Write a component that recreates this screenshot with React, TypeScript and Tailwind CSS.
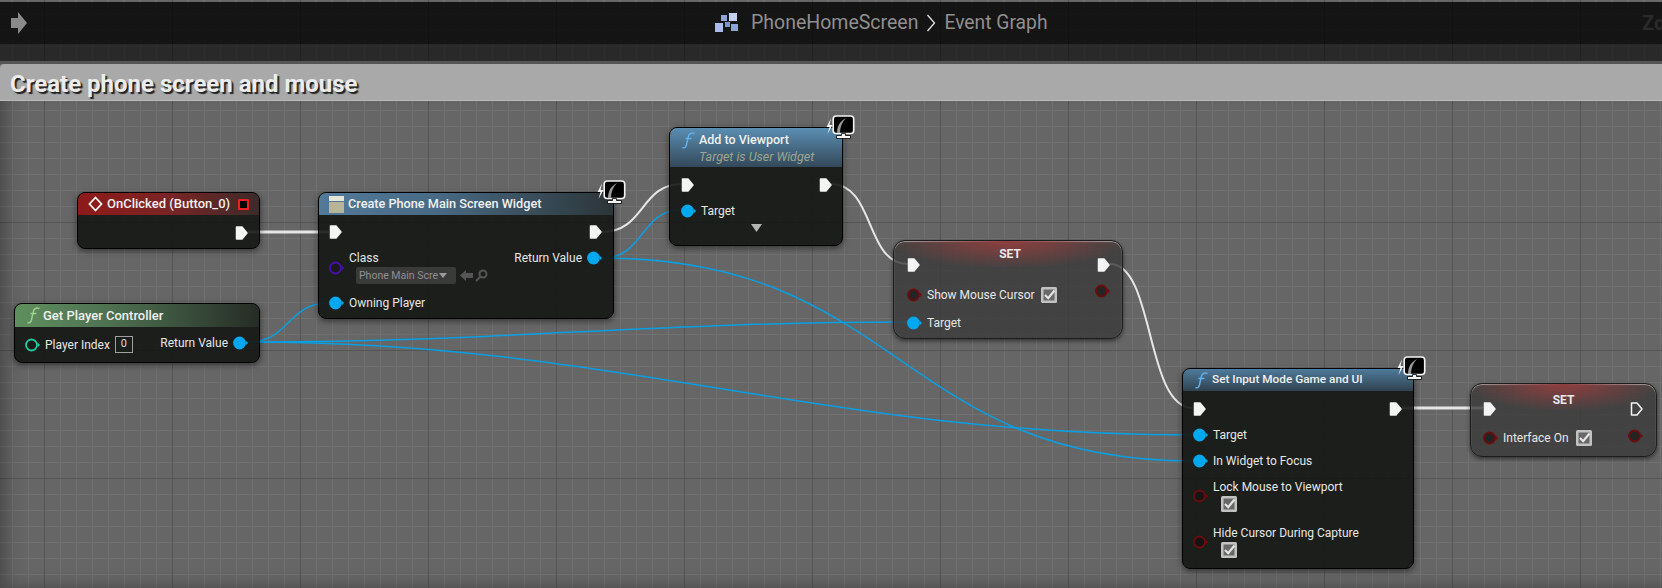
import type { FC, ReactNode } from "react";

const ExecPin: FC<{ hollow?: boolean }> = ({ hollow }) => (
  <svg width="13" height="14" viewBox="0 0 13 14" className="shrink-0">
    <path
      d="M1.500 1h5.500l5 6-5 6H1.500z"
      fill={hollow ? "none" : "#f4f4f4"}
      stroke="#f4f4f4"
      strokeWidth="1.500"
      strokeLinejoin="round"
    />
  </svg>
);

const DataPin: FC<{ ring?: string; fill?: string }> = ({ ring = "#00a8f2", fill = "#00a8f2" }) => (
  <svg width="15" height="14" viewBox="0 0 15 14" className="shrink-0">
    <circle cx="6.500" cy="7" r="5.500" fill={fill} stroke={ring} strokeWidth="1.800" />
    <path d="M12.800 4.800l2.200 2.200-2.200 2.200z" fill={ring} />
  </svg>
);

const BoolPin = () => <DataPin ring="#6e0b0b" fill="#242424" />;

const CheckBox = () => (
  <svg width="16" height="16" viewBox="0 0 16 16" className="shrink-0">
    <rect width="16" height="16" rx="1.500" fill="#c2c2c2" />
    <rect x="2.500" y="2.500" width="11" height="11" fill="#686868" />
    <path d="M4 8l3.200 3.200L13.500 3.500" fill="none" stroke="#e4e4e4" strokeWidth="2.200" />
  </svg>
);

const FuncIcon: FC<{ color?: string }> = ({ color = "#62aee6" }) => (
  <svg width="14" height="17" viewBox="0 0 14 17" className="shrink-0" fill="none" stroke={color} strokeWidth="1.500">
    <path d="M0.500 15.500c2.500 1 3.500-.5 4-3L6.500 4c.5-2.500 3-3.500 6-2.500" />
    <path d="M3.500 6.500h6" />
  </svg>
);

const Monitor = () => (
  <svg width="31" height="25" viewBox="0 0 31 25" className="absolute top-[-13px] right-[-13px]">
    <path d="M7 3.500L2.500 12h3L3.500 19l5-9h-3z" fill="#f4f4f4" />
    <rect x="9.200" y="1" width="20.500" height="17.500" rx="3" fill="#000" stroke="#f4f4f4" strokeWidth="1.600" />
    <path d="M13 18c0-7 3-12 9-15-4 4-6 9-6 15z" fill="#9a9a9a" />
    <path d="M17.500 18.500v2h-5v3h14v-3h-5v-2z" fill="#f4f4f4" stroke="#000" strokeWidth="0.800" />
  </svg>
);

const Label: FC<{ children: ReactNode; className?: string }> = ({ children, className = "" }) => (
  <span className={`text-[12px] leading-none whitespace-nowrap text-[#e6e6e6] ${className}`}>{children}</span>
);

const App: FC = () => (
  <div className="relative flex h-[588px] w-[1662px] flex-col overflow-hidden bg-[#666666] bg-[linear-gradient(#555555_1px,transparent_1px),linear-gradient(90deg,#555555_1px,transparent_1px),linear-gradient(#717171_1px,transparent_1px),linear-gradient(90deg,#717171_1px,transparent_1px)] bg-[size:128px_128px,128px_128px,16px_16px,16px_16px] bg-[position:44px_94px,44px_94px,12px_14px,12px_14px] font-['Roboto',sans-serif]">
    {/* breadcrumb bar */}
    <header className="mt-[2px] flex h-[42px] shrink-0 items-center bg-black/80">
      <svg width="18" height="22" viewBox="0 0 18 22" className="ml-[10px]">
        <path d="M1 6h7V0l9 11-9 11v-6H1z" fill="#8a8a8a" />
      </svg>
      <svg width="25" height="22" viewBox="0 0 25 22" className="ml-[686px]">
        <rect x="7" y="3" width="6" height="6" fill="#8ea4d8" />
        <rect x="15" y="1" width="8" height="8" fill="#c3d0f2" />
        <rect x="1" y="11" width="8" height="9" fill="#a9bbea" />
        <rect x="11" y="10" width="5" height="5" fill="#7e93c8" />
        <rect x="17" y="12" width="7" height="7" fill="#8ea4d8" />
      </svg>
      <span className="ml-[12px] text-[19.500px] text-[#8f8f8f]">PhoneHomeScreen</span>
      <svg width="10" height="20" viewBox="0 0 10 20" className="ml-[8px]">
        <path d="M1.500 2l7 8-7 8" fill="none" stroke="#e2e2e2" strokeWidth="1.300" />
      </svg>
      <span className="ml-[8px] text-[19.300px] text-[#8f8f8f]">Event Graph</span>
      <span className="ml-auto w-[20px] overflow-hidden text-[20px] font-bold whitespace-nowrap text-[#2a2a2a]">
        Zoom
      </span>
    </header>
    <div className="h-[17px] shrink-0 bg-black/60" />
    <div className="h-[3px] shrink-0 bg-[#555555]" />

    {/* comment box title */}
    <div className="flex h-[37px] shrink-0 items-center rounded-tl-[4px] border-b border-[#bcbcbc] bg-[#a9a9a9] pt-[3px] pl-[10px]">
      <span className="text-[24px] font-bold text-[#ececec] [text-shadow:2px_2px_1px_#222]">
        Create phone screen and mouse
      </span>
    </div>

    {/* edge shading of the graph panel */}
    <div className="pointer-events-none absolute inset-x-0 top-[101px] bottom-0 shadow-[inset_14px_-8px_18px_-8px_rgba(0,0,0,0.3)]" />

    {/* wires */}
    <svg className="pointer-events-none absolute inset-0" width="1662" height="588" fill="none">
      <g stroke="#e6e6e6" strokeWidth="2">
        <path d="M248 232H329" strokeWidth="2.800" />
        <path d="M602 232C645 232 640 184 682 184" />
        <path d="M831 184C875 184 865 264 908 264" />
        <path d="M1110 264C1155 264 1145 408 1193 408" />
        <path d="M1402 408H1483" strokeWidth="2.800" />
      </g>
      <g stroke="#0a9fe3" strokeWidth="1.500">
        <path d="M248 342C290 342 287 303 329 303" />
        <path d="M248 342C500 342 650 322 907 322" />
        <path d="M248 342C620 342 820 435 1193 435" />
        <path d="M602 258C645 258 640 210 681 210" />
        <path d="M602 258C900 258 900 461 1193 461" />
      </g>
    </svg>

    {/* OnClicked */}
    <section className="absolute top-[192px] left-[77px] h-[57px] w-[183px] rounded-[8px] border border-black bg-[#141613]/90 shadow-[0_2px_6px_rgba(0,0,0,0.5)]">
      <div className="flex h-[22px] items-center rounded-t-[7px] bg-[linear-gradient(90deg,#8e1a1a,#7a2424_50%,#3c2b2a)] px-[10px]">
        <svg width="15" height="16" viewBox="0 0 15 16" className="shrink-0">
          <path d="M7.500 1.500l6 6.500-6 6.500-6-6.500z" fill="#8e1a1a" stroke="#f2f2f2" strokeWidth="1.800" />
        </svg>
        <span className="ml-[4px] text-[13px] font-medium whitespace-nowrap text-[#f0f0f0]">OnClicked (Button_0)</span>
        <span className="ml-auto size-[11px] shrink-0 rounded-[1px] border-2 border-[#ee2020] bg-black" />
      </div>
      <div className="mt-[11px] flex justify-end pr-[11px]">
        <ExecPin />
      </div>
    </section>

    {/* Create Phone Main Screen Widget */}
    <section className="absolute top-[192px] left-[318px] h-[127px] w-[296px] rounded-[8px] border border-black bg-[#141613]/90 shadow-[0_2px_6px_rgba(0,0,0,0.5)]">
      <div className="relative flex h-[22px] items-center rounded-t-[7px] bg-[linear-gradient(90deg,#527a99,#486a84_40%,#2c3538)] px-[10px]">
        <svg width="15" height="17" viewBox="0 0 15 17" className="shrink-0">
          <rect width="15" height="5" fill="#e6e6da" />
          <rect y="6" width="15" height="11" fill="#b8b49a" />
        </svg>
        <span className="ml-[4px] text-[12.700px] font-medium whitespace-nowrap text-[#f0f0f0]">
          Create Phone Main Screen Widget
        </span>
        <Monitor />
      </div>
      <div className="flex justify-between pr-[11px] pl-[10px]">
        <div className="flex flex-col">
          <div className="mt-[10px]">
            <ExecPin />
          </div>
          <div className="mt-[13px] flex items-center gap-[5px]">
            <DataPin ring="#4a0fb0" fill="#1a1a1a" />
            <div className="flex flex-col">
              <Label className="h-[15px]">Class</Label>
              <div className="flex items-center">
                <div className="ml-[7px] flex h-[17px] w-[100px] items-center rounded-[2px] bg-[#3a3a3a] pl-[3px]">
                  <span className="text-[10.500px] text-[#8f8f8f]">Phone Main Scre</span>
                  <svg width="8" height="5" viewBox="0 0 8 5" className="ml-[1px]">
                    <path d="M0 0h8L4 5z" fill="#9a9a9a" />
                  </svg>
                </div>
                <svg width="13" height="11" viewBox="0 0 13 11" className="ml-[4px]">
                  <path d="M0 5.500L6 0v3h7v5H6v3z" fill="#555555" />
                </svg>
                <svg width="13" height="13" viewBox="0 0 13 13" className="ml-[2px]" fill="none" stroke="#555555" strokeWidth="2">
                  <circle cx="8" cy="5" r="3.500" />
                  <path d="M5.500 7.500L1 12" />
                </svg>
              </div>
            </div>
          </div>
          <div className="mt-[12px] flex items-center gap-[5px]">
            <DataPin />
            <Label>Owning Player</Label>
          </div>
        </div>
        <div className="flex flex-col items-end">
          <div className="mt-[10px]">
            <ExecPin />
          </div>
          <div className="mt-[12px] flex items-center gap-[5px]">
            <Label className="text-[12.500px]">Return Value</Label>
            <DataPin />
          </div>
        </div>
      </div>
    </section>

    {/* Get Player Controller */}
    <section className="absolute top-[303px] left-[14px] h-[60px] w-[246px] rounded-[8px] border border-black bg-[#141613]/90 shadow-[0_2px_6px_rgba(0,0,0,0.5)]">
      <div className="flex h-[23px] items-center rounded-t-[7px] bg-[linear-gradient(90deg,#5f8f5e,#4d7050_40%,#262c26)] pl-[12px]">
        <FuncIcon color="#9ad08c" />
        <span className="ml-[2px] text-[13px] font-medium whitespace-nowrap text-[#f0f0f0]">Get Player Controller</span>
      </div>
      <div className="mt-[9px] flex items-center justify-between pr-[11px] pl-[10px]">
        <div className="flex items-center">
          <DataPin ring="#1fc8a0" fill="#1a1a1a" />
          <Label className="ml-[5px]">Player Index</Label>
          <span className="ml-[5px] flex h-[17px] w-[18px] items-center justify-center border border-[#a0a0a0] text-[11px] text-[#dcdcdc]">
            0
          </span>
        </div>
        <div className="flex -translate-y-[2px] items-center gap-[5px]">
          <Label className="text-[12.500px]">Return Value</Label>
          <DataPin />
        </div>
      </div>
    </section>

    {/* Add to Viewport */}
    <section className="absolute top-[127px] left-[669px] h-[119px] w-[174px] rounded-[8px] border border-black bg-[#141613]/90 shadow-[0_2px_6px_rgba(0,0,0,0.5)]">
      <div className="relative flex h-[39px] items-start rounded-t-[7px] bg-[linear-gradient(180deg,#5a8eb2,#33495a)] pt-[3px] pl-[12px]">
        <div className="mt-[1px]">
          <FuncIcon />
        </div>
        <div className="ml-[3px] flex flex-col">
          <span className="text-[12.500px] leading-[17px] font-medium text-[#f0f0f0]">Add to Viewport</span>
          <span className="text-[12.500px] leading-[17px] whitespace-nowrap text-[#9ea48e] italic">Target is User Widget</span>
        </div>
        <Monitor />
      </div>
      <div className="flex justify-between pr-[10px] pl-[11px]">
        <div className="flex flex-col">
          <div className="mt-[11px]">
            <ExecPin />
          </div>
          <div className="mt-[12px] flex items-center gap-[5px]">
            <DataPin />
            <Label>Target</Label>
          </div>
        </div>
        <div className="mt-[11px]">
          <ExecPin />
        </div>
      </div>
      <div className="mt-[6px] flex justify-center">
        <svg width="11" height="8" viewBox="0 0 11 8">
          <path d="M0 0h11L5.500 8z" fill="#b4b4b4" />
        </svg>
      </div>
    </section>

    {/* SET Show Mouse Cursor */}
    <section className="absolute top-[240px] left-[893px] h-[99px] w-[230px] rounded-[12px] border border-[#1c1c1c] bg-[#3a3a3a]/80 shadow-[inset_0_1px_1px_#aaaaaa,0_2px_4px_rgba(0,0,0,0.5)]">
      <div className="flex h-[26px] justify-center rounded-t-[11px] bg-[radial-gradient(ellipse_at_top,#8f3e3e,transparent_75%)] pt-[7px] pl-[4px] text-[12px] leading-none font-bold text-[#e8e8e8]">
        SET
      </div>
      <div className="flex justify-between pr-[12px] pl-[13px]">
        <div className="-mt-[9px] flex flex-col">
          <ExecPin />
          <div className="mt-[15px] flex items-center gap-[5px]">
            <BoolPin />
            <Label>Show Mouse Cursor</Label>
            <span className="ml-[1px]">
              <CheckBox />
            </span>
          </div>
          <div className="mt-[13px] flex items-center gap-[5px]">
            <DataPin />
            <Label>Target</Label>
          </div>
        </div>
        <div className="-mt-[9px] flex flex-col items-end">
          <ExecPin />
          <div className="mt-[12px]">
            <BoolPin />
          </div>
        </div>
      </div>
    </section>

    {/* Set Input Mode Game and UI */}
    <section className="absolute top-[368px] left-[1182px] h-[201px] w-[232px] rounded-[8px] border border-black bg-[#141613]/90 shadow-[0_2px_6px_rgba(0,0,0,0.5)]">
      <div className="relative flex h-[22px] items-center rounded-t-[7px] bg-[linear-gradient(180deg,#4f7b9c,#2f4250)] pl-[12px]">
        <FuncIcon />
        <span className="ml-[3px] text-[11.800px] font-medium whitespace-nowrap text-[#f0f0f0]">Set Input Mode Game and UI</span>
        <Monitor />
      </div>
      <div className="flex justify-between pr-[11px] pl-[10px]">
        <div className="flex flex-col">
          <div className="mt-[11px]">
            <ExecPin />
          </div>
          <div className="mt-[12px] flex items-center gap-[5px]">
            <DataPin />
            <Label>Target</Label>
          </div>
          <div className="mt-[12px] flex items-center gap-[5px]">
            <DataPin />
            <Label>In Widget to Focus</Label>
          </div>
          <Label className="mt-[13px] ml-[20px]">Lock Mouse to Viewport</Label>
          <div className="mt-[3px] flex items-start gap-[13px]">
            <div className="-mt-[7px]">
              <DataPin ring="#6e0b0b" fill="#141414" />
            </div>
            <CheckBox />
          </div>
          <Label className="mt-[15px] ml-[20px]">Hide Cursor During Capture</Label>
          <div className="mt-[3px] flex items-start gap-[13px]">
            <div className="-mt-[7px]">
              <DataPin ring="#6e0b0b" fill="#141414" />
            </div>
            <CheckBox />
          </div>
        </div>
        <div className="mt-[11px]">
          <ExecPin />
        </div>
      </div>
    </section>

    {/* SET Interface On */}
    <section className="absolute top-[383px] left-[1470px] h-[74px] w-[187px] rounded-[12px] border border-[#1c1c1c] bg-[#3a3a3a]/80 shadow-[inset_0_1px_1px_#aaaaaa,0_2px_4px_rgba(0,0,0,0.5)]">
      <div className="flex h-[26px] justify-center rounded-t-[11px] bg-[radial-gradient(ellipse_at_top,#8f3e3e,transparent_75%)] pt-[10px] text-[12px] leading-none font-bold text-[#e8e8e8]">
        SET
      </div>
      <div className="flex justify-between pr-[13px] pl-[12px]">
        <div className="-mt-[8px] flex flex-col">
          <ExecPin />
          <div className="mt-[14px] flex items-center gap-[5px]">
            <BoolPin />
            <Label>Interface On</Label>
            <span className="ml-[2px]">
              <CheckBox />
            </span>
          </div>
        </div>
        <div className="-mt-[8px] flex flex-col items-end">
          <ExecPin hollow />
          <div className="mt-[13px]">
            <BoolPin />
          </div>
        </div>
      </div>
    </section>
  </div>
);

export default App;
